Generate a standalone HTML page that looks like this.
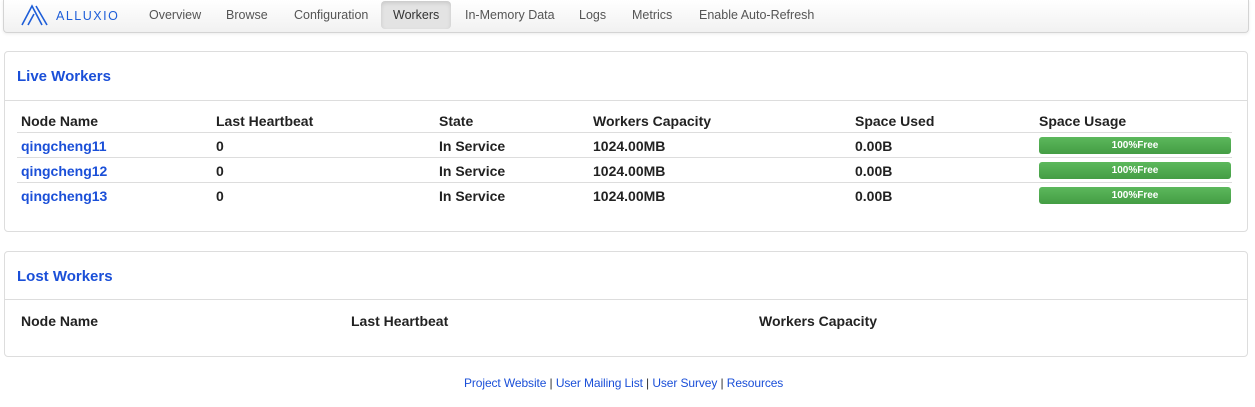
<!DOCTYPE html>
<html><head><style>
*{margin:0;padding:0;box-sizing:border-box}
body{width:1255px;height:407px;background:#fff;font-family:"Liberation Sans",Arial,sans-serif;position:relative;overflow:hidden;color:#222}
.nav{position:absolute;left:3px;top:0;width:1246px;height:33px;background:linear-gradient(#fff,#f1f1f1);border:1px solid #d4d4d4;border-top:none;border-radius:0 0 4px 4px;box-shadow:0 1px 3px rgba(0,0,0,.08)}
.nav a{position:absolute;top:8px;font-size:12.5px;color:#555;text-decoration:none}
.act{position:absolute;left:377px;top:1px;width:70px;height:28px;background:#e3e3e3;border-radius:4px;box-shadow:inset 0 2px 4px rgba(0,0,0,.12)}
.logo{position:absolute;left:52px;top:9px;font-size:12.5px;letter-spacing:1.5px;color:#1e5ed8}
.panel{position:absolute;left:4px;width:1244px;border:1px solid #ddd;border-radius:4px;background:#fff}
.h{position:absolute;left:12px;font-size:15px;font-weight:bold;color:#1a4fd8}
.div{position:absolute;left:0;right:0;height:1px;background:#ddd}
.t{position:absolute;font-size:14px;font-weight:bold;color:#222}
.l{color:#1a4fd8}
.row{position:absolute;left:12px;width:1215px;height:1px;background:#ddd}
.bar{position:absolute;left:1034px;width:192px;height:17px;border-radius:3px;background:linear-gradient(#5cb85c,#449d44);color:#fff;font-size:10px;font-weight:bold;text-align:center;line-height:17px}
.f{position:absolute;top:376px;left:464px;font-size:12px;color:#333;letter-spacing:-0.1px}
.f a{color:#1a4fd8;text-decoration:none}
</style></head><body>
<div class="nav">
<svg style="position:absolute;left:17px;top:4px" width="28" height="22" viewBox="0 0 28 22"><path d="M1 21 L11 2 L21 21 M7 21 L13 10 M15 2 L26 21" fill="none" stroke="#1e5ed8" stroke-width="1.6"/></svg>
<div class="logo">ALLUXIO</div>
<div class="act"></div>
<a style="left:145px">Overview</a><a style="left:222px">Browse</a><a style="left:290px">Configuration</a><a style="left:389px;color:#333">Workers</a><a style="left:461px">In-Memory Data</a><a style="left:575px">Logs</a><a style="left:628px">Metrics</a><a style="left:695px">Enable Auto-Refresh</a>
</div>
<div class="panel" style="top:51px;height:181px">
<div class="h" style="top:16px">Live Workers</div>
<div class="div" style="top:48px"></div>
<div class="t" style="left:16px;top:61px">Node Name</div><div class="t" style="left:211px;top:61px">Last Heartbeat</div><div class="t" style="left:434px;top:61px">State</div><div class="t" style="left:588px;top:61px">Workers Capacity</div><div class="t" style="left:850px;top:61px">Space Used</div><div class="t" style="left:1034px;top:61px">Space Usage</div>
<div class="row" style="top:80px"></div>
<div class="t l" style="left:16px;top:86px">qingcheng11</div><div class="t" style="left:211px;top:86px">0</div><div class="t" style="left:434px;top:86px">In Service</div><div class="t" style="left:588px;top:86px">1024.00MB</div><div class="t" style="left:850px;top:86px">0.00B</div><div class="bar" style="top:85px">100%Free</div>
<div class="row" style="top:105px"></div>
<div class="t l" style="left:16px;top:111px">qingcheng12</div><div class="t" style="left:211px;top:111px">0</div><div class="t" style="left:434px;top:111px">In Service</div><div class="t" style="left:588px;top:111px">1024.00MB</div><div class="t" style="left:850px;top:111px">0.00B</div><div class="bar" style="top:110px">100%Free</div>
<div class="row" style="top:130px"></div>
<div class="t l" style="left:16px;top:136px">qingcheng13</div><div class="t" style="left:211px;top:136px">0</div><div class="t" style="left:434px;top:136px">In Service</div><div class="t" style="left:588px;top:136px">1024.00MB</div><div class="t" style="left:850px;top:136px">0.00B</div><div class="bar" style="top:135px">100%Free</div>
</div>
<div class="panel" style="top:251px;height:106px">
<div class="h" style="top:16px">Lost Workers</div>
<div class="div" style="top:47px"></div>
<div class="t" style="left:16px;top:61px">Node Name</div><div class="t" style="left:346px;top:61px">Last Heartbeat</div><div class="t" style="left:754px;top:61px">Workers Capacity</div>
</div>
<div class="f"><a>Project Website</a> | <a>User Mailing List</a> | <a>User Survey</a> | <a>Resources</a></div>
</body></html>
